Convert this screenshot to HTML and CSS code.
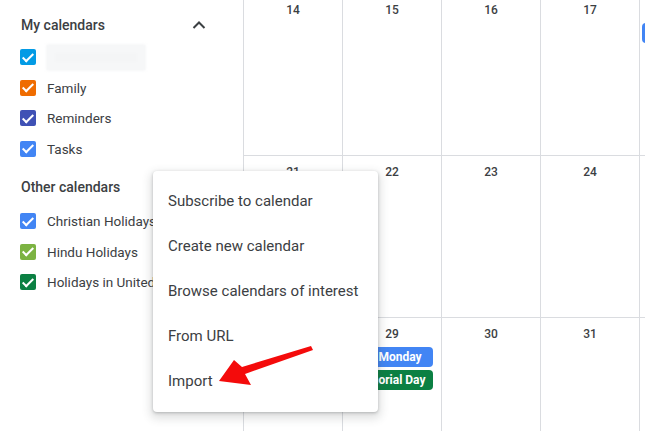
FILE: index.html
```html
<!DOCTYPE html>
<html lang="en">
<head>
    <meta charset="UTF-8">
    <title>Calendar</title>
    <link rel="stylesheet" href="styles.css">
</head>
<body>
    <div class="app">
        <aside class="sidebar">
            <div class="section-head first">
                <span>My calendars</span>
                <svg class="chevron" width="14" height="10" viewBox="0 0 14 10"><path d="M1.5 8 L7 2.5 L12.5 8" fill="none" stroke="#3c4043" stroke-width="2"/></svg>
            </div>
            <div class="cal"><span class="box c-sky"></span><span class="blur"></span></div>
            <div class="cal"><span class="box c-orange"></span><span>Family</span></div>
            <div class="cal"><span class="box c-indigo"></span><span>Reminders</span></div>
            <div class="cal"><span class="box c-blue"></span><span>Tasks</span></div>

            <div class="section-head">
                <span>Other calendars</span>
            </div>
            <div class="cal"><span class="box c-blue"></span><span>Christian Holidays</span></div>
            <div class="cal"><span class="box c-lime"></span><span>Hindu Holidays</span></div>
            <div class="cal"><span class="box c-green"></span><span>Holidays in United</span></div>
        </aside>

        <main class="month">
            <div class="week">
                <div class="day"><div class="num">14</div></div>
                <div class="day"><div class="num">15</div></div>
                <div class="day"><div class="num">16</div></div>
                <div class="day"><div class="num">17</div></div>
                <div class="day"><div class="num"></div><div class="chip blue"></div></div>
            </div>
            <div class="week">
                <div class="day"><div class="num">21</div></div>
                <div class="day"><div class="num">22</div></div>
                <div class="day"><div class="num">23</div></div>
                <div class="day"><div class="num">24</div></div>
                <div class="day"><div class="num"></div></div>
            </div>
            <div class="week">
                <div class="day"><div class="num">28</div></div>
                <div class="day"><div class="num">29</div>
                    <div class="chip blue">Whit Monday</div>
                    <div class="chip green">Memorial Day</div>
                </div>
                <div class="day"><div class="num">30</div></div>
                <div class="day"><div class="num">31</div></div>
                <div class="day"><div class="num"></div></div>
            </div>
        </main>
    </div>

    <div class="menu">
        <div class="item">Subscribe to calendar</div>
        <div class="item">Create new calendar</div>
        <div class="item">Browse calendars of interest</div>
        <div class="item">From URL</div>
        <div class="item">Import</div>
    </div>

    <svg class="arrow" width="645" height="431" viewBox="0 0 645 431">
        <polygon points="219,381 234,360 242,367 311,346 313,350 245,374 251,385" fill="#f40b0b"/>
    </svg>
</body>
</html>
```

FILE: styles.css
```css
body { margin: 0; font-family: Roboto, "Liberation Sans", sans-serif; color: #3c4043; background: #fff; overflow: hidden; width: 645px; height: 431px; }
.app { display: flex; height: 431px; }

.sidebar { width: 243px; flex: none; }
.section-head { display: flex; align-items: center; justify-content: space-between; padding: 14px 37px 0 21px; height: 18px; margin-bottom: 10px; font-size: 14px; font-weight: 500; line-height: 18px; }
.section-head.first { padding-top: 16px; margin-bottom: 8px; }
.chevron { display: block; }
.cal { display: flex; align-items: center; height: 30.5px; padding-left: 20px; font-size: 13.5px; white-space: nowrap; }
.box { width: 16px; height: 16px; border-radius: 2px; margin-right: 11px; flex: none; position: relative; }
.box::after { content: ""; position: absolute; left: 5px; top: 1.5px; width: 4px; height: 9px; border: solid #fff; border-width: 0 2px 2px 0; transform: rotate(45deg); }
.c-sky { background: #039be5; }
.c-orange { background: #ef6c00; }
.c-indigo { background: #3f51b5; }
.c-blue { background: #4285f4; }
.c-lime { background: #7cb342; }
.c-green { background: #0b8043; }
.blur { width: 100px; height: 27px; margin-left: -1px; border-radius: 3px; background: #f4f5f6; box-shadow: inset 0 0 0 9px #f6f7f8; filter: blur(1px); }

.month { flex: 1; margin-top: -6px; overflow: hidden; }
.week { display: flex; height: 161px; border-bottom: 1px solid #dadce0; }
.day { width: 98px; flex: none; border-left: 1px solid #dadce0; padding-top: 8px; }
.num { text-align: center; font-size: 12px; font-weight: 500; line-height: 16px; height: 16px; margin-bottom: 5px; }
.chip { height: 20px; line-height: 20px; margin: 0 8px 3px 2px; padding-left: 6px; border-radius: 4px; color: #fff; font-size: 12px; font-weight: 700; white-space: nowrap; overflow: hidden; }
.chip.blue { background: #4285f4; }
.chip.green { background: #0b8043; }

.menu { position: absolute; left: 153px; top: 171px; width: 225px; padding: 8px 0; background: #fff; border-radius: 4px; box-shadow: 0 1px 3px rgba(60,64,67,.3), 0 4px 8px 3px rgba(60,64,67,.15); }
.item { height: 45px; line-height: 45px; padding-left: 15px; font-size: 15px; color: #3c4043; white-space: nowrap; }

.arrow { position: absolute; left: 0; top: 0; pointer-events: none; }
```
